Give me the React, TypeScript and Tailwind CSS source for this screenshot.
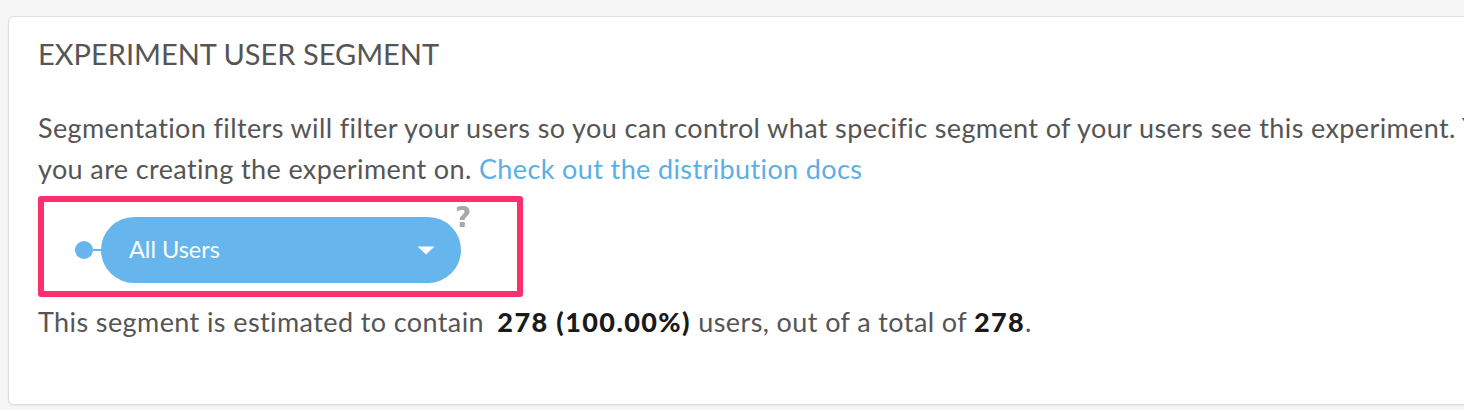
import React from 'react'

function Caret() {
  return (
    <svg width="18" height="9" viewBox="0 0 18 9" className="shrink-0">
      <path d="M0.5 0.5 L17.5 0.5 L9 8.5 Z" fill="#ffffff" />
    </svg>
  )
}

export default function App() {
  return (
    <div
      className="h-[410px] w-[1464px] overflow-hidden bg-[#f6f6f6] pt-4"
      style={{ fontFamily: 'Lato, "Open Sans", sans-serif' }}
    >
      <div className="ml-2 h-[389px] w-[1480px] rounded-md border border-[#dddddd] bg-white pl-[29px] pt-[19px] shadow-[0_1px_2px_rgba(0,0,0,0.06)]">
        <h2 className="text-[29px] leading-[36px] text-[#555555]">
          EXPERIMENT USER SEGMENT
        </h2>

        <p className="mt-[35px] whitespace-nowrap text-[27px] leading-[41px] tracking-[0.38px] text-[#555555]">
          Segmentation filters will filter your users so you can control what specific segment of your users see this experiment. You
          <br />
          you are creating the experiment on.{' '}
          <a className="text-[#5aafe6]">Check out the distribution docs</a>
        </p>

        <div className="relative mt-[7px] flex h-[101px] w-[485px] items-start rounded-[3px] border-[6px] border-[#ff2f6e] pl-[31px] pt-[15px]">
          <div className="flex h-[66px] items-center">
            <span className="h-[18px] w-[18px] rounded-full bg-[#66b5ec]" />
            <span className="h-[2px] w-[8px] bg-[#66b5ec]" />
          </div>
          <button className="flex h-[66px] w-[360px] items-center justify-between rounded-full bg-[#66b5ec] pl-[28px] pr-[26px] text-[23.5px] text-white">
            All Users
            <Caret />
          </button>
          <span
            className="absolute left-[411px] top-[2px] text-[28px] font-bold leading-none text-[#a8a8a8]"
            style={{ fontFamily: '"DejaVu Sans", sans-serif' }}
          >
            ?
          </span>
        </div>

        <p className="mt-[8px] whitespace-nowrap text-[27px] leading-[34px] tracking-[0.4px] text-[#555555]">
          This segment is estimated to contain{' '}
          <b className="ml-[6px] font-black tracking-[1.4px] text-[#1a1a1a]">278 (100.00%)</b> users, out of a total of{' '}
          <b className="font-black tracking-[1.4px] text-[#1a1a1a]">278</b>.
        </p>
      </div>
    </div>
  )
}
